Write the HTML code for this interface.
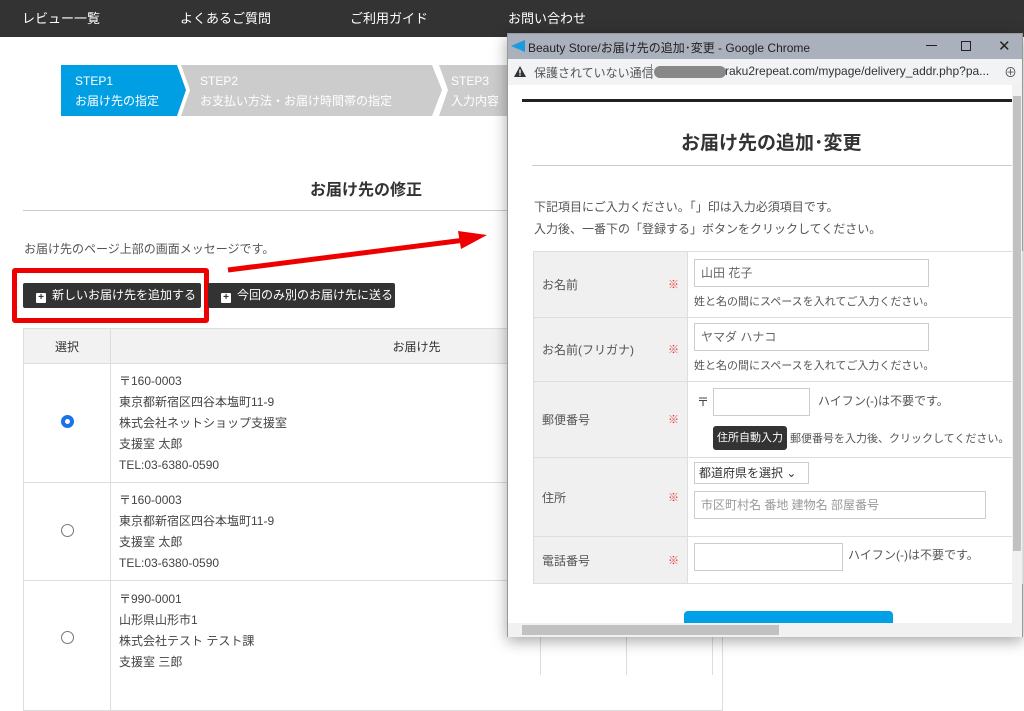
<!DOCTYPE html>
<html><head><meta charset="utf-8"><style>
*{box-sizing:border-box;margin:0;padding:0}
body{width:1024px;height:675px;overflow:hidden;background:#fff;font-family:"Liberation Sans","Noto Sans CJK JP",sans-serif;color:#333;position:relative;font-size:12px}
.a{position:absolute}
.nav{left:0;top:0;width:1024px;height:37px;background:#333;color:#fff;font-size:13px}
.nav span{position:absolute;top:8px}
.step{top:65px;height:51px;color:#fff;font-size:12px;line-height:20px;padding:6px 0 0 14px}
.btn{background:#333;color:#fff;height:25px;line-height:25px;font-size:12px;padding-left:13px;border-radius:2px;white-space:nowrap}
.plus{position:relative;top:1px;display:inline-block;width:10px;height:10px;background:#fff;color:#333;font-size:10px;line-height:10px;text-align:center;font-weight:bold;margin-right:6px;border-radius:1px}
table{border-collapse:collapse}
.lt td,.lt th{border:1px solid #ddd;font-weight:normal;font-size:12px}
.radio{display:inline-block;width:13px;height:13px;border-radius:50%;border:1px solid #777}
.win{left:507px;top:33px;width:516px;height:604px;background:#fff;border:1px solid #999;box-shadow:0 4px 14px rgba(0,0,0,.35)}
.ft td{border:1px solid #ddd;font-size:12px;vertical-align:middle}
.ft td.l{background:#f0f0f0;color:#555;padding-left:8px;position:relative}
.req{position:absolute;right:8px;color:#e33;font-size:11px}
.inp{position:absolute;border:1px solid #ccc;height:28px;background:#fff;color:#999;font-size:12px;line-height:26px;padding-left:6px}
</style></head><body>
<div class="a nav"><span style="left:22px">レビュー一覧</span><span style="left:180px">よくあるご質問</span><span style="left:350px">ご利用ガイド</span><span style="left:508px">お問い合わせ</span></div>

<svg class="a" style="left:61px;top:65px" width="460" height="51"><polygon points="0,0 116,0 125,25 116,51 0,51" fill="#009fe3"/><polygon points="119,0 367,0 377,25 367,51 116,51 125,25 116,0" fill="#ccc" transform="translate(4,0)"/><polygon points="374,0 460,0 460,51 374,51 383,25" fill="#ccc" transform="translate(4,0)"/></svg>
<div class="a step" style="left:61px">STEP1<br>お届け先の指定</div>
<div class="a step" style="left:186px">STEP2<br>お支払い方法・お届け時間帯の指定</div>
<div class="a step" style="left:437px">STEP3<br>入力内容</div>

<div class="a" style="left:310px;top:176px;font-size:16px;font-weight:bold">お届け先の修正</div>
<div class="a" style="left:23px;top:210px;width:490px;height:1px;background:#ccc"></div>
<div class="a" style="left:24px;top:240px;font-size:12px;color:#555">お届け先のページ上部の画面メッセージです。</div>
<div class="a" style="left:12px;top:268px;width:197px;height:55px;border:5px solid #e00;border-radius:3px"></div>
<div class="a btn" style="left:23px;top:283px;width:178px"><span class="plus">+</span>新しいお届け先を追加する</div>
<div class="a btn" style="left:208px;top:283px;width:187px"><span class="plus">+</span>今回のみ別のお届け先に送る</div>
<svg class="a" style="left:225px;top:225px" width="270" height="50"><line x1="3" y1="45" x2="240" y2="15" stroke="#e00" stroke-width="5"/><polygon points="233,6 262,10 236,24" fill="#e00"/></svg>

<table class="a lt" style="left:23px;top:328px;width:700px">
<tr style="height:35px;background:#f2f2f2"><th style="width:87px">選択</th><th>お届け先</th></tr>
<tr style="height:119px"><td style="text-align:center"><span class="radio" style="border:4px solid #1a73e8;box-shadow:inset 0 0 0 1px #fff"></span></td><td style="padding-left:8px;line-height:21px;color:#444">〒160-0003<br>東京都新宿区四谷本塩町11-9<br>株式会社ネットショップ支援室<br>支援室 太郎<br>TEL:03-6380-0590</td></tr>
<tr style="height:98px"><td style="text-align:center"><span class="radio"></span></td><td style="padding-left:8px;line-height:21px;color:#444">〒160-0003<br>東京都新宿区四谷本塩町11-9<br>支援室 太郎<br>TEL:03-6380-0590</td></tr>
<tr style="height:130px"><td style="text-align:center;vertical-align:top;padding-top:50px"><span class="radio"></span></td><td style="padding-left:8px;line-height:21px;color:#444;vertical-align:top;padding-top:8px">〒990-0001<br>山形県山形市1<br>株式会社テスト テスト課<br>支援室 三郎</td></tr>
</table>
<div class="a" style="left:540px;top:600px;width:1px;height:75px;background:#ddd"></div>
<div class="a" style="left:626px;top:600px;width:1px;height:75px;background:#ddd"></div>
<div class="a" style="left:712px;top:600px;width:1px;height:75px;background:#ddd"></div>

<div class="a win">
 <div class="a" style="left:0;top:0;width:514px;height:25px;background:#abb0bd;font-size:12px;color:#222">
  <svg class="a" style="left:3px;top:6px" width="14" height="12"><polygon points="0,6 14,0 14,12" fill="#1a9be0"/></svg>
  <span class="a" style="left:20px;top:5px">Beauty Store/お届け先の追加･変更 - Google Chrome</span>
  <span class="a" style="left:418px;top:11px;width:11px;height:1px;background:#222"></span>
  <span class="a" style="left:453px;top:7px;width:10px;height:10px;border:1px solid #222"></span>
  <span class="a" style="left:490px;top:3px;font-size:15px">✕</span>
 </div>
 <div class="a" style="left:0;top:25px;width:514px;height:26px;background:#f1f3f4;font-size:12px;color:#555">
  <svg class="a" style="left:6px;top:7px" width="12" height="11"><polygon points="6,0 12,11 0,11" fill="#333"/><rect x="5.3" y="3.5" width="1.4" height="4" fill="#fff"/><rect x="5.3" y="8.3" width="1.4" height="1.4" fill="#fff"/></svg>
  <span class="a" style="left:26px;top:5px">保護されていない通信</span>
  <span class="a" style="left:143px;top:5px;width:1px;height:15px;background:#888"></span>
  <span class="a" style="left:146px;top:7px;width:72px;height:12px;border-radius:6px;background:#888"></span>
  <span class="a" style="left:217px;top:5px;color:#333">raku2repeat.com/mypage/delivery_addr.php?pa...</span>
  <span class="a" style="left:496px;top:3px;font-size:13px">⊕</span>
 </div>
 <div class="a" style="left:14px;top:65px;width:491px;height:3px;background:#222"></div>
 <div class="a" style="left:173px;top:94px;font-size:19px;font-weight:bold;color:#333">お届け先の追加･変更</div>
 <div class="a" style="left:24px;top:131px;width:481px;height:1px;background:#ccc"></div>
 <div class="a" style="left:26px;top:162px;font-size:12px;color:#555;line-height:22px">下記項目にご入力ください。「」印は入力必須項目です。<br>入力後、一番下の「登録する」ボタンをクリックしてください。</div>
 <table class="a ft" style="left:25px;top:217px;width:490px">
  <tr style="height:66px"><td class="l" style="width:154px">お名前<span class="req">※</span></td><td></td></tr>
  <tr style="height:64px"><td class="l">お名前(フリガナ)<span class="req">※</span></td><td></td></tr>
  <tr style="height:76px"><td class="l">郵便番号<span class="req">※</span></td><td></td></tr>
  <tr style="height:79px"><td class="l">住所<span class="req">※</span></td><td></td></tr>
  <tr style="height:47px"><td class="l">電話番号<span class="req">※</span></td><td></td></tr>
 </table>
 <div class="inp" style="left:186px;top:225px;width:235px;color:#666">山田 花子</div>
 <div class="a" style="left:186px;top:259px;font-size:11px;color:#555">姓と名の間にスペースを入れてご入力ください。</div>
 <div class="inp" style="left:186px;top:289px;width:235px;color:#666">ヤマダ ハナコ</div>
 <div class="a" style="left:186px;top:323px;font-size:11px;color:#555">姓と名の間にスペースを入れてご入力ください。</div>
 <div class="a" style="left:189px;top:359px;color:#444">〒</div>
 <div class="inp" style="left:205px;top:354px;width:97px"></div>
 <div class="a" style="left:310px;top:358px;color:#555">ハイフン(-)は不要です。</div>
 <div class="a" style="left:205px;top:392px;width:74px;height:24px;background:#333;color:#fff;border-radius:3px;font-size:11px;line-height:24px;text-align:center">住所自動入力</div>
 <div class="a" style="left:282px;top:396px;font-size:11px;color:#555">郵便番号を入力後、クリックしてください。</div>
 <div class="a" style="left:186px;top:428px;width:115px;height:22px;border:1px solid #ccc;font-size:12px;line-height:20px;padding-left:4px;color:#333">都道府県を選択 ⌄</div>
 <div class="inp" style="left:186px;top:457px;width:292px">市区町村名 番地 建物名 部屋番号</div>
 <div class="inp" style="left:186px;top:509px;width:149px"></div>
 <div class="a" style="left:340px;top:512px;color:#555">ハイフン(-)は不要です。</div>
 <div class="a" style="left:176px;top:577px;width:209px;height:12px;background:#00a0e6;border-radius:4px 4px 0 0"></div>
 <div class="a" style="left:504px;top:51px;width:10px;height:538px;background:#f1f1f1"></div>
 <div class="a" style="left:505px;top:62px;width:8px;height:455px;background:#c1c1c1"></div>
 <div class="a" style="left:0;top:589px;width:514px;height:14px;background:#f1f1f1"></div>
 <div class="a" style="left:14px;top:591px;width:257px;height:10px;background:#c1c1c1"></div>
</div>
</body></html>
